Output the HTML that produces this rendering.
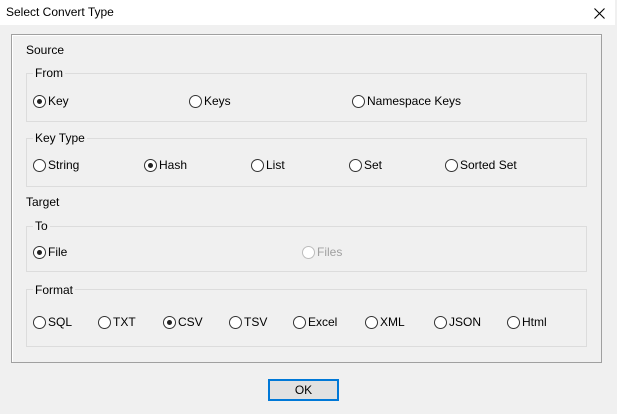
<html><head><style>
body{margin:0;width:617px;height:414px;background:#f0f0f0;font-family:"Liberation Sans",sans-serif;font-size:12px;color:#000;position:relative;overflow:hidden}
.a{position:absolute}
.title{left:0;top:0;width:615px;height:25px;background:#fff}
.frame{border:1px solid #a0a0a0;box-shadow:1px 1px 0 #fff inset}
.gb{border:1px solid #dcdcdc}
.lbl{background:#f0f0f0;padding:0 2px;line-height:14px}
.r{position:absolute;line-height:14px;white-space:nowrap}
.r i{display:inline-block;width:13px;height:13px;border:1px solid #333;border-radius:50%;background:#fff;vertical-align:-3px;margin-right:2px;box-sizing:border-box;position:relative}
.r i.on:after{content:"";position:absolute;left:3px;top:3px;width:5px;height:5px;border-radius:50%;background:#222}
.dis{color:#a0a0a0}.dis i{border-color:#bcbcbc}
</style></head><body>
<div class="a title"></div>
<div class="a" style="left:6px;top:5px;font-size:12px">Select Convert Type</div>
<svg class="a" style="left:594px;top:8px" width="11" height="11"><path d="M0.5 0.5L10.5 10.5M10.5 0.5L0.5 10.5" stroke="#000" stroke-width="1.1"/></svg>
<div class="a frame" style="left:11px;top:34px;width:589px;height:327px"></div>
<div class="a" style="left:26px;top:43px">Source</div>
<div class="a gb" style="left:26px;top:73px;width:559px;height:47px"></div>
<div class="a lbl" style="left:33px;top:66px">From</div>
<div class="r" style="left:33px;top:94px"><i class="on"></i>Key</div>
<div class="r" style="left:189px;top:94px"><i></i>Keys</div>
<div class="r" style="left:352px;top:94px"><i></i>Namespace Keys</div>
<div class="a gb" style="left:26px;top:138px;width:559px;height:47px"></div>
<div class="a lbl" style="left:33px;top:131px">Key Type</div>
<div class="r" style="left:33px;top:158px"><i></i>String</div>
<div class="r" style="left:144px;top:158px"><i class="on"></i>Hash</div>
<div class="r" style="left:251px;top:158px"><i></i>List</div>
<div class="r" style="left:349px;top:158px"><i></i>Set</div>
<div class="r" style="left:445px;top:158px"><i></i>Sorted Set</div>
<div class="a" style="left:26px;top:195px">Target</div>
<div class="a gb" style="left:26px;top:226px;width:559px;height:44px"></div>
<div class="a lbl" style="left:33px;top:219px">To</div>
<div class="r" style="left:33px;top:245px"><i class="on"></i>File</div>
<div class="r dis" style="left:302px;top:245px"><i></i>Files</div>
<div class="a gb" style="left:26px;top:289px;width:559px;height:56px"></div>
<div class="a lbl" style="left:33px;top:283px">Format</div>
<div class="r" style="left:33px;top:315px"><i></i>SQL</div>
<div class="r" style="left:98px;top:315px"><i></i>TXT</div>
<div class="r" style="left:163px;top:315px"><i class="on"></i>CSV</div>
<div class="r" style="left:229px;top:315px"><i></i>TSV</div>
<div class="r" style="left:293px;top:315px"><i></i>Excel</div>
<div class="r" style="left:365px;top:315px"><i></i>XML</div>
<div class="r" style="left:434px;top:315px"><i></i>JSON</div>
<div class="r" style="left:507px;top:315px"><i></i>Html</div>
<div class="a" style="left:268px;top:379px;width:67px;height:18px;border:2px solid #0078d7;background:#e1e1e1;text-align:center;line-height:18px">OK</div>
</body></html>
